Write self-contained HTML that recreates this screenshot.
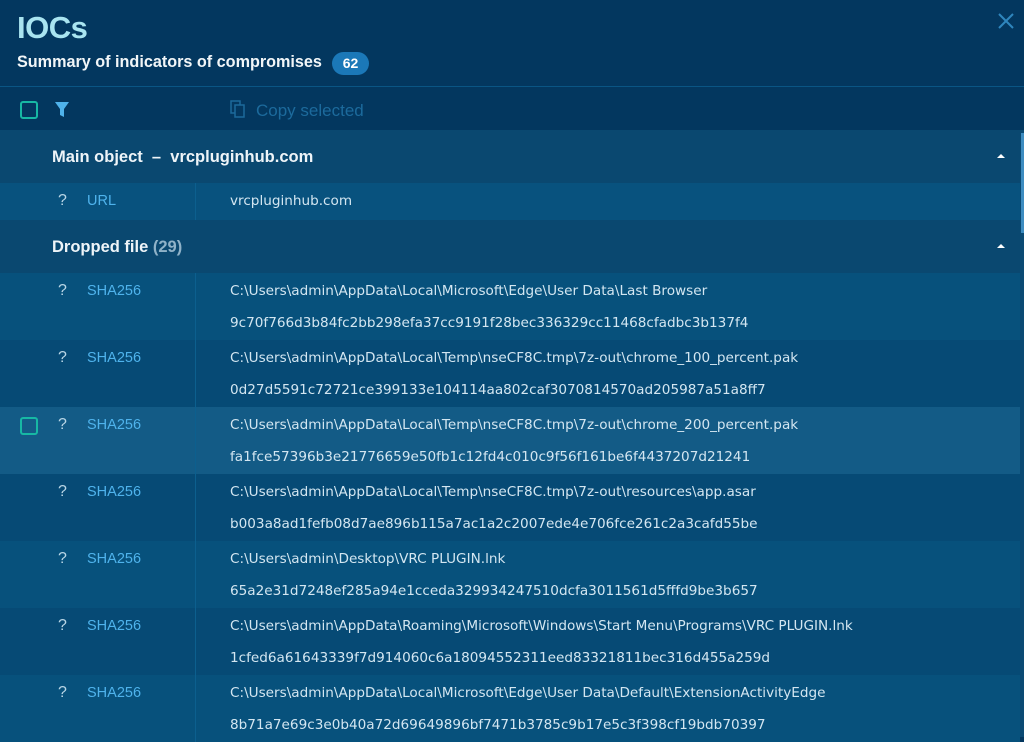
<!DOCTYPE html>
<html><head><meta charset="utf-8"><style>
*{margin:0;padding:0;box-sizing:border-box}
body{width:1024px;height:737px;overflow:hidden;background:#03375f;font-family:"Liberation Sans",sans-serif;position:relative}
.title{position:absolute;left:17px;top:10px;font-size:31px;font-weight:bold;color:#a9e4f0;letter-spacing:-0.5px}
.sub{position:absolute;left:17px;top:53px;font-size:16.2px;font-weight:bold;color:#f2f6f8}
.badge{position:absolute;left:332px;top:52px;width:37px;height:23px;border-radius:12px;background:#1b78b8;color:#fff;font-weight:bold;font-size:14px;text-align:center;line-height:23px}
.close{position:absolute;left:997px;top:12px}
.sep{position:absolute;left:0;top:86px;width:1024px;height:1px;background:#0a5584}
.cb{position:absolute;width:18px;height:18px;border:2.5px solid #17b8a4;border-radius:3px}
.copy{position:absolute;left:256px;top:101px;font-size:17px;color:#1c6a9c}
.list{position:absolute;left:0;top:130px;width:1020px}
.gh{height:53px;background:#0a4870;position:relative;color:#eef4f8;font-weight:bold;font-size:16.5px;padding-left:52px;line-height:55px}
.gh .n{color:#8fb2c8}
.gh:after{content:"";position:absolute;right:15px;top:24px;border-left:4px solid transparent;border-right:4px solid transparent;border-bottom:4px solid #fff}
.row{position:relative;height:67px;background:#07517c}
.row.d{background:#064a75}
.row.h{background:#135b86}
.row.u{height:37px;background:#08527e}
.q{position:absolute;left:58px;top:9px;color:#b9d6e6;font-size:16px}
.t{position:absolute;left:87px;top:10px;color:#4fb3ec;font-size:14.5px}
.div{position:absolute;left:195px;top:0;bottom:0;width:1px;background:#0c5f8e}
.v{position:absolute;left:230px;color:#d3e6f1;line-height:32px;font-family:"DejaVu Sans",sans-serif;font-size:13.6px;top:2px;white-space:nowrap}
.scroll{position:absolute;left:1020px;top:130px;width:4px;height:607px;background:#0b4a73}
.thumb{position:absolute;left:1021px;top:133px;width:3px;height:100px;background:#3d8cc0}
</style></head><body>
<div class="title">IOCs</div>
<div class="sub">Summary of indicators of compromises</div>
<div class="badge">62</div>
<svg class="close" width="18" height="18" viewBox="0 0 18 18"><path d="M2 2L16 16M16 2L2 16" stroke="#2f86bd" stroke-width="2"/></svg>
<div class="sep"></div>
<div class="cb" style="left:20px;top:101px"></div>
<svg style="position:absolute;left:55px;top:102px" width="14" height="16" viewBox="0 0 14 16"><path d="M0 0H14L9 7V15L5 13V7Z" fill="#4fb3ec"/></svg>
<svg style="position:absolute;left:230px;top:100px" width="16" height="18" viewBox="0 0 16 18"><rect x="1" y="1" width="9" height="12" fill="none" stroke="#1c6a9c" stroke-width="1.5"/><rect x="5" y="5" width="9" height="12" fill="#03375f" stroke="#1c6a9c" stroke-width="1.5"/></svg>
<div class="copy">Copy selected</div>
<div class="scroll"></div><div class="thumb"></div>
<div class="list">
<div class="gh">Main object &nbsp;–&nbsp; vrcpluginhub.com</div>
<div class="row u"><span class="q">?</span><span class="t">URL</span><div class="div"></div><div class="v" style="top:2px">vrcpluginhub.com</div></div>
<div class="gh">Dropped file <span class="n">(29)</span></div>
<div class="row"><span class="q">?</span><span class="t">SHA256</span><div class="div"></div><div class="v">C:\Users\admin\AppData\Local\Microsoft\Edge\User Data\Last Browser<br>9c70f766d3b84fc2bb298efa37cc9191f28bec336329cc11468cfadbc3b137f4</div></div>
<div class="row d"><span class="q">?</span><span class="t">SHA256</span><div class="div"></div><div class="v">C:\Users\admin\AppData\Local\Temp\nseCF8C.tmp\7z-out\chrome_100_percent.pak<br>0d27d5591c72721ce399133e104114aa802caf3070814570ad205987a51a8ff7</div></div>
<div class="row h"><div class="cb" style="left:20px;top:10px"></div><span class="q">?</span><span class="t">SHA256</span><div class="div"></div><div class="v">C:\Users\admin\AppData\Local\Temp\nseCF8C.tmp\7z-out\chrome_200_percent.pak<br>fa1fce57396b3e21776659e50fb1c12fd4c010c9f56f161be6f4437207d21241</div></div>
<div class="row d"><span class="q">?</span><span class="t">SHA256</span><div class="div"></div><div class="v">C:\Users\admin\AppData\Local\Temp\nseCF8C.tmp\7z-out\resources\app.asar<br>b003a8ad1fefb08d7ae896b115a7ac1a2c2007ede4e706fce261c2a3cafd55be</div></div>
<div class="row"><span class="q">?</span><span class="t">SHA256</span><div class="div"></div><div class="v">C:\Users\admin\Desktop\VRC PLUGIN.lnk<br>65a2e31d7248ef285a94e1cceda329934247510dcfa3011561d5fffd9be3b657</div></div>
<div class="row d"><span class="q">?</span><span class="t">SHA256</span><div class="div"></div><div class="v">C:\Users\admin\AppData\Roaming\Microsoft\Windows\Start Menu\Programs\VRC PLUGIN.lnk<br>1cfed6a61643339f7d914060c6a18094552311eed83321811bec316d455a259d</div></div>
<div class="row"><span class="q">?</span><span class="t">SHA256</span><div class="div"></div><div class="v">C:\Users\admin\AppData\Local\Microsoft\Edge\User Data\Default\ExtensionActivityEdge<br>8b71a7e69c3e0b40a72d69649896bf7471b3785c9b17e5c3f398cf19bdb70397</div></div>
</div>
</body></html>
